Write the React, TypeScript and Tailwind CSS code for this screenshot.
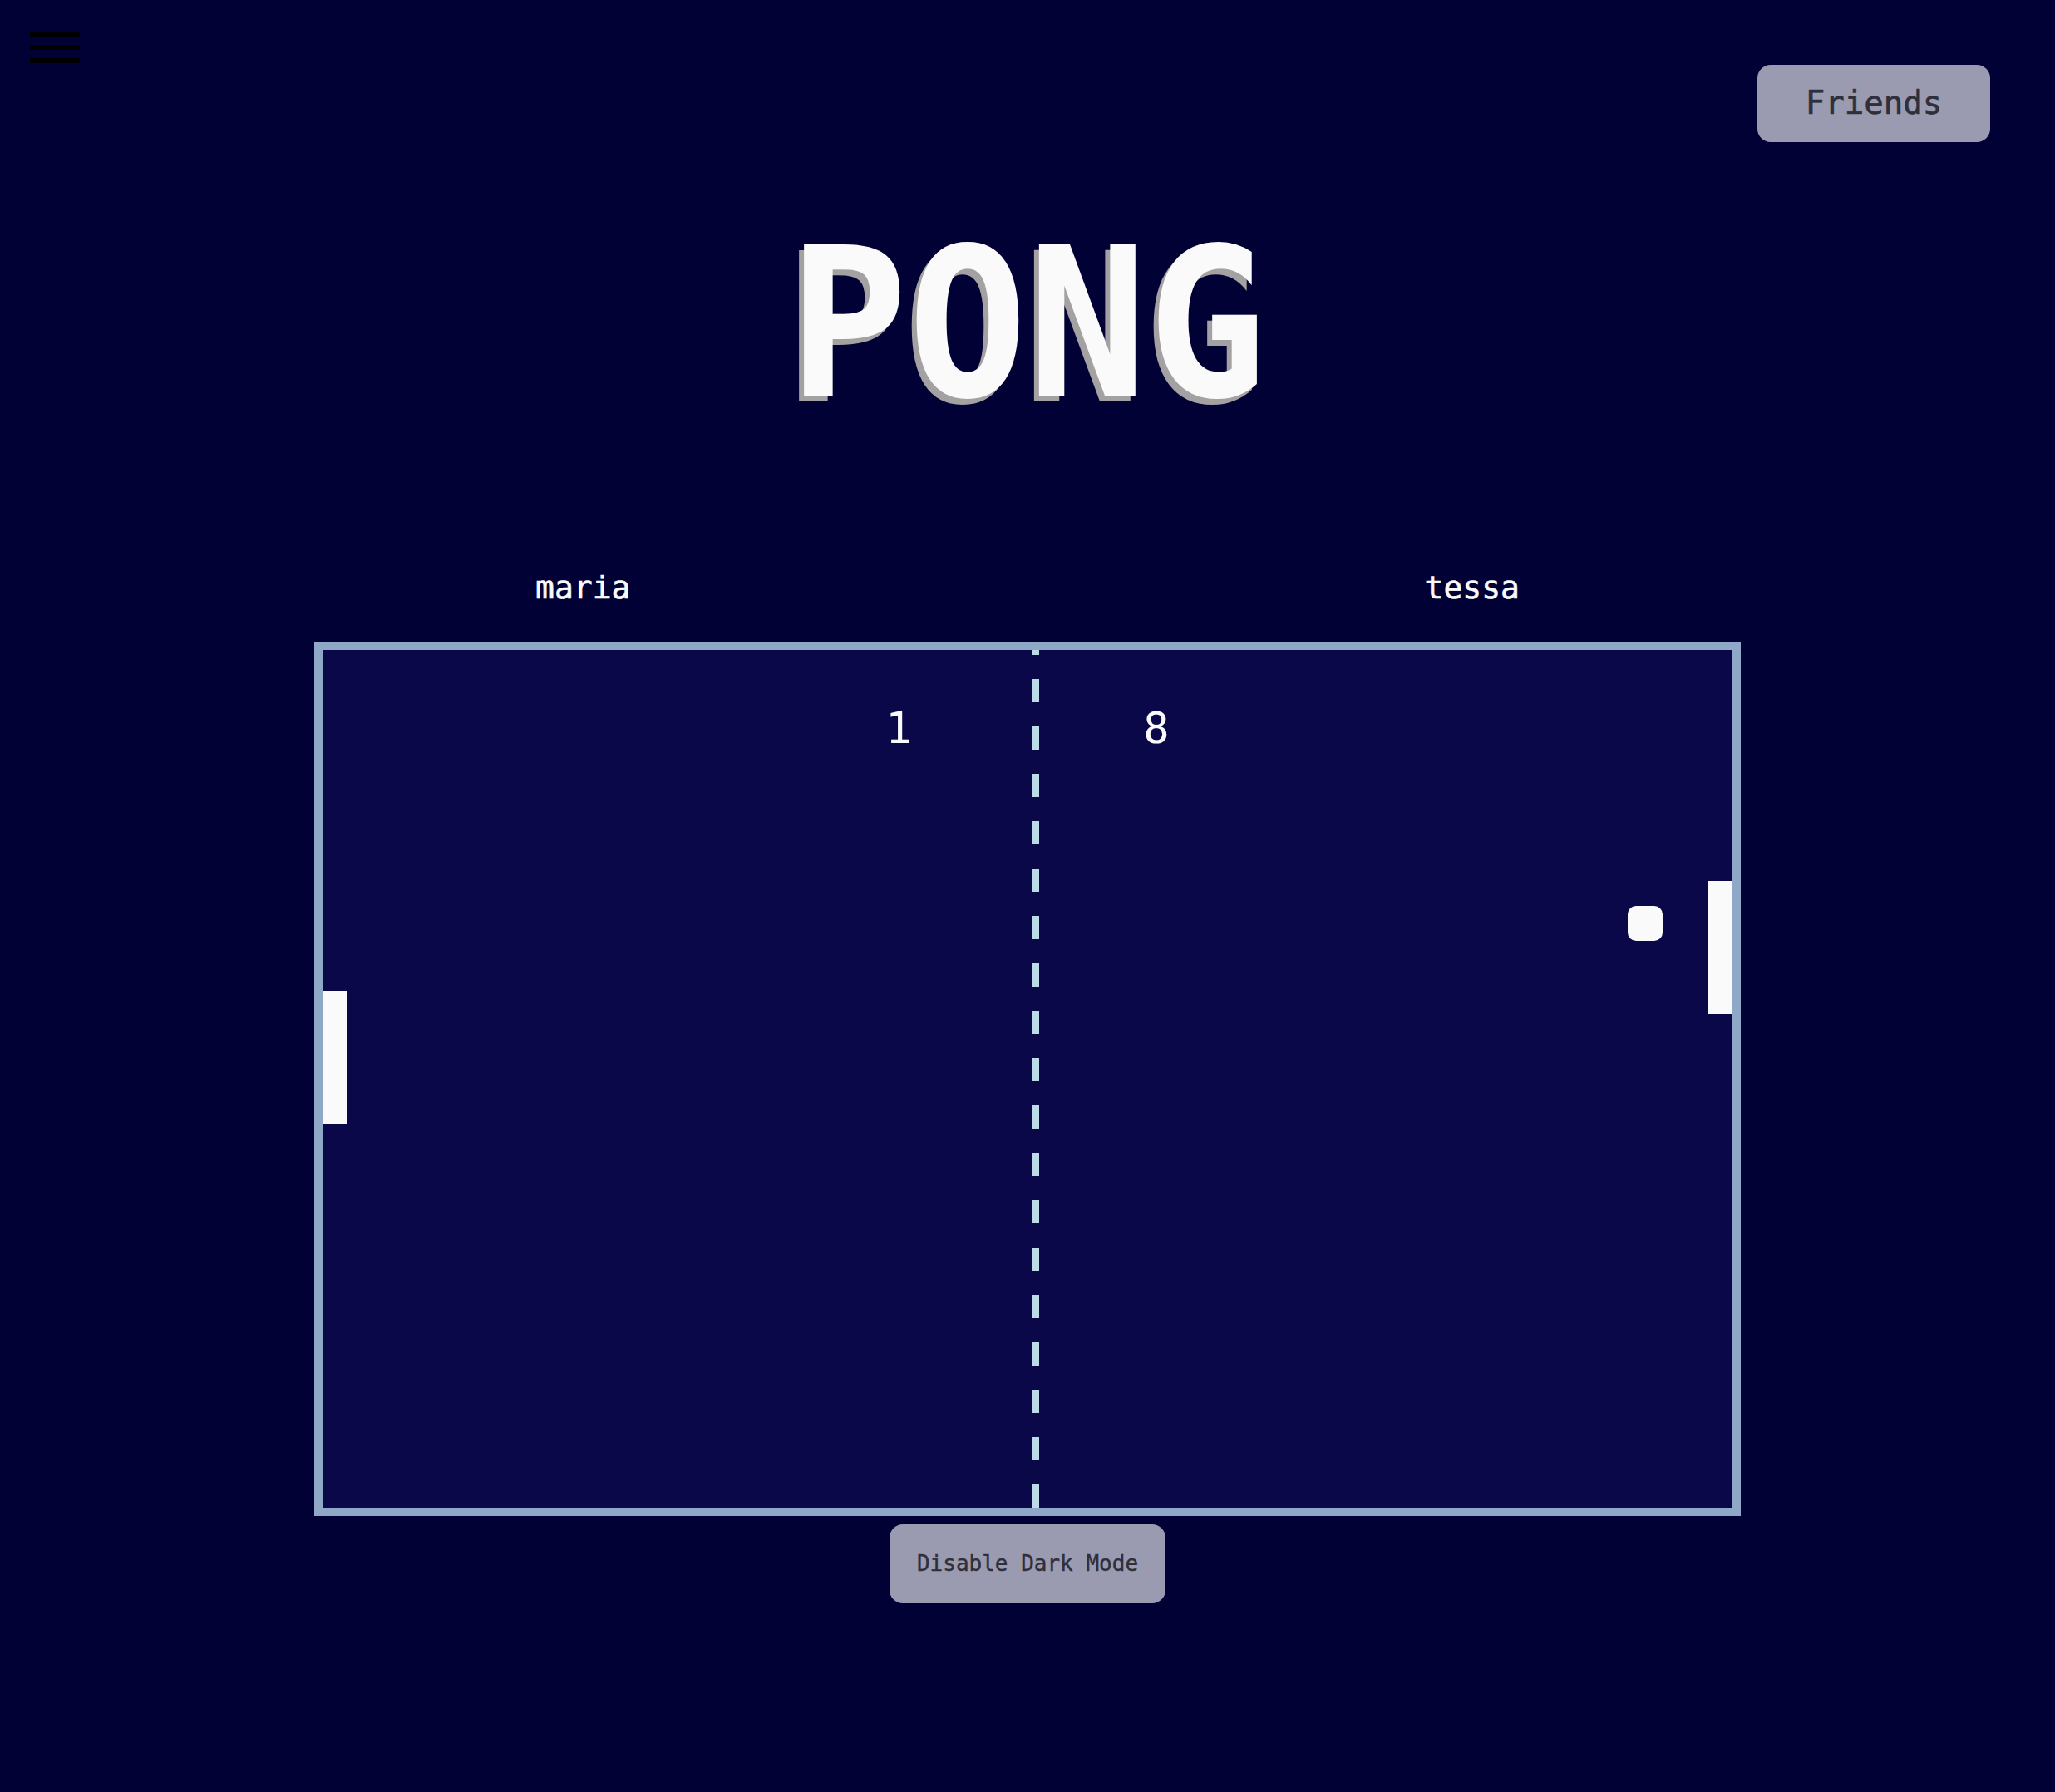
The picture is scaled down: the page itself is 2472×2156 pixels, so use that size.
const dashes = Array.from({ length: 20 }, (_, i) => i);

const mono = "font-['DejaVu_Sans_Mono','Liberation_Mono',monospace]";

const Board = () => {
  return (
    <div className="relative mx-auto w-[1716px] h-[1052px] border-[10px] border-[#8fa8c8] bg-[#0a0848] overflow-hidden">
      {/* center net */}
      <div className="absolute left-[854px] top-[-22px] w-[8px] flex flex-col gap-[29px]">
        {dashes.map((d) => (
          <div key={d} className="w-[8px] h-[28px] bg-[#bcdbe6]" />
        ))}
      </div>

      {/* scores */}
      <div className={`absolute top-[68px] left-[693px] -translate-x-1/2 text-[52px] leading-none text-[#fafafa] ${mono}`}>
        1
      </div>
      <div className={`absolute top-[68px] left-[1003px] -translate-x-1/2 text-[52px] leading-none text-[#fafafa] ${mono}`}>
        8
      </div>

      {/* paddles + ball */}
      <div className="absolute left-0 top-[410px] w-[30px] h-[160px] bg-[#fafafa]" />
      <div className="absolute right-0 top-[278px] w-[30px] h-[160px] bg-[#fafafa]" />
      <div className="absolute left-[1570px] top-[308px] w-[42px] h-[42px] rounded-[10px] bg-[#fafafa]" />
    </div>
  );
};

const App = () => {
  return (
    <div className={`min-h-screen w-full bg-[#020135] flex flex-col ${mono}`}>
      <div className="flex items-start justify-between">
        <button className="ml-[36px] mt-[38px] flex flex-col gap-[10px]">
          <span className="block w-[60px] h-[6px] bg-black" />
          <span className="block w-[60px] h-[6px] bg-black" />
          <span className="block w-[60px] h-[6px] bg-black" />
        </button>
        <button className="mt-[78px] mr-[78px] w-[280px] h-[93px] rounded-[16px] bg-[#9a9bb0] text-[#2e2f3a] text-[39px] [-webkit-text-stroke:0.6px_#2e2f3a]">
          Friends
        </button>
      </div>

      <h1 className="mt-[98px] h-[244px] flex items-center justify-center text-[239px] leading-none font-bold text-[#fafafa] [text-shadow:-6px_7px_0_#a3a1a1]">
        <span className="inline-block scale-y-[1.045] translate-y-[-2px]">PONG</span>
      </h1>

      <div className="mt-[175px] mx-auto w-[1716px] px-[266px] flex justify-between text-[38px] leading-none text-[#fafafa] [-webkit-text-stroke:0.6px_#fafafa]">
        <span>maria</span>
        <span>tessa</span>
      </div>

      <div className="mt-[46px]">
        <Board />
      </div>

      <div className="flex justify-center mt-[10px]">
        <button className="w-[332px] h-[95px] rounded-[16px] bg-[#9a9bb0] text-[#2e2f3a] text-[26px] [-webkit-text-stroke:0.4px_#2e2f3a]">
          Disable Dark Mode
        </button>
      </div>
    </div>
  );
};

export default App;
